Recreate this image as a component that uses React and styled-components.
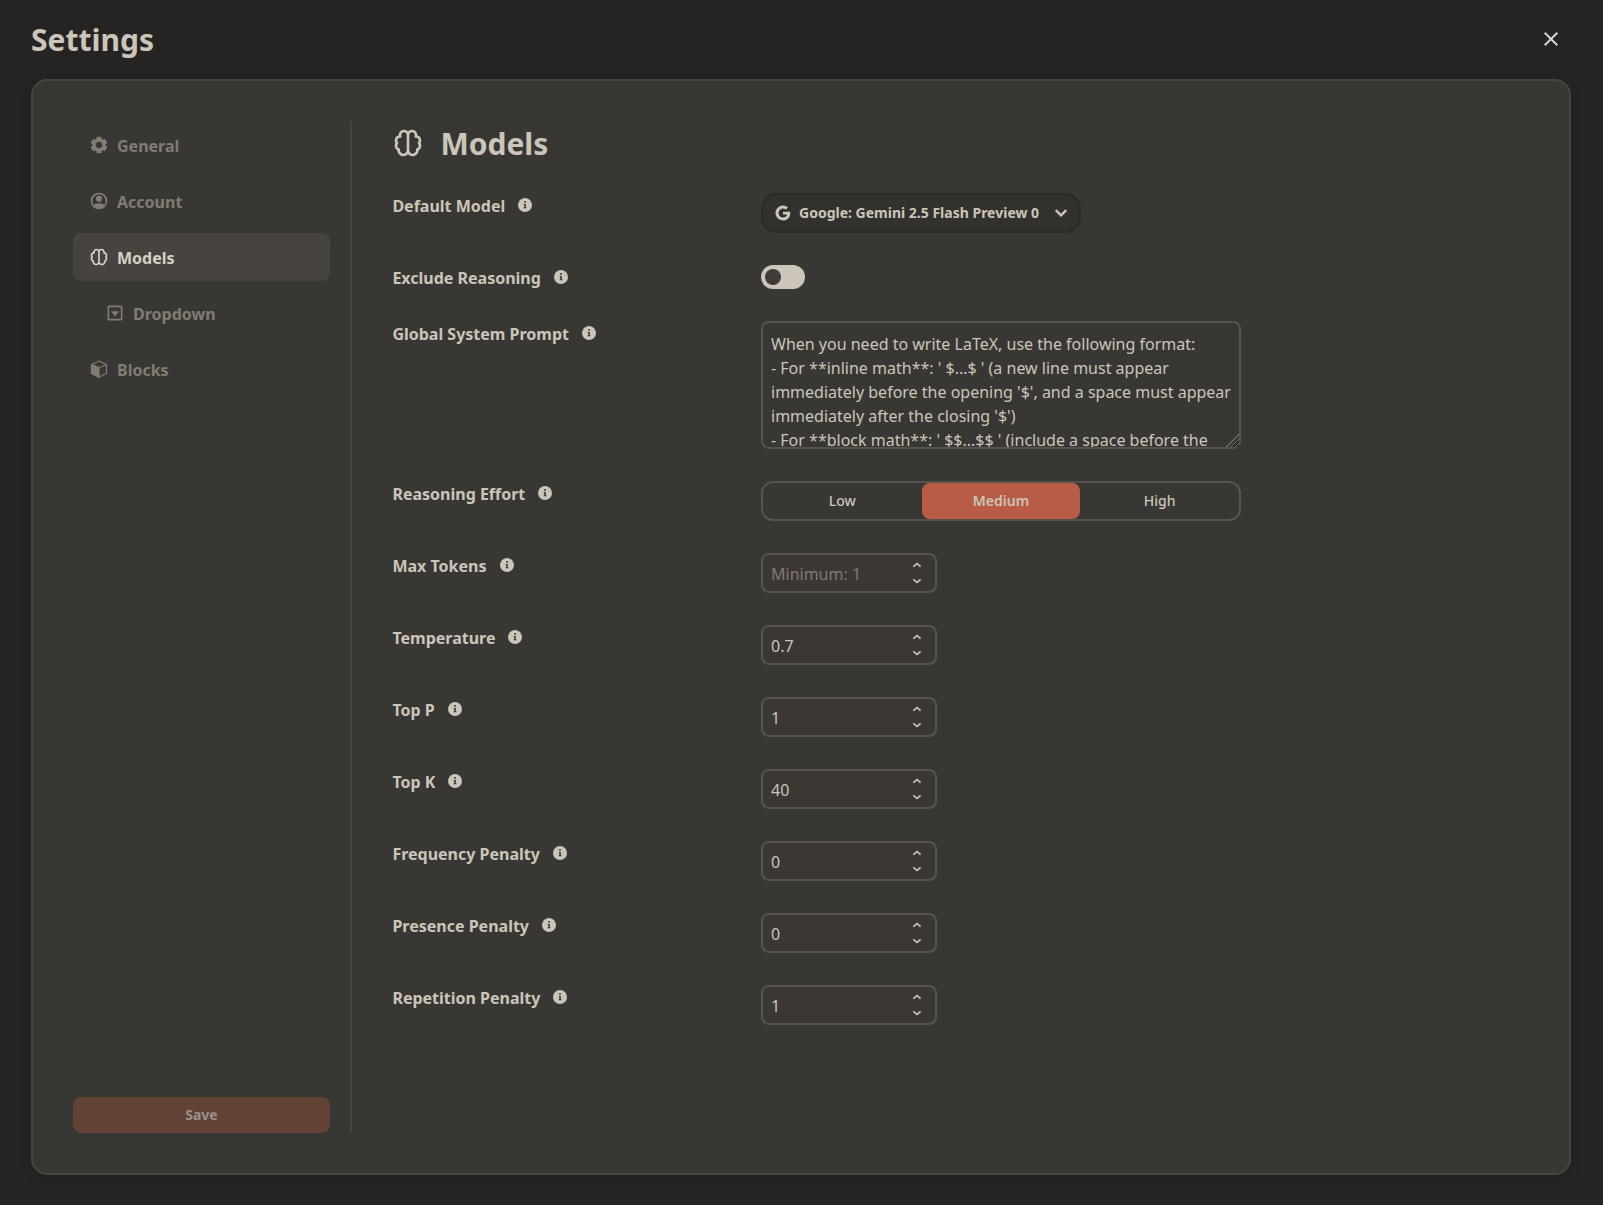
import React from 'react';
import styled, { createGlobalStyle } from 'styled-components';
import { RiBrain2Line, RiGoogleFill } from 'react-icons/ri';
import { BiSolidCog, BiCaretDownSquare } from 'react-icons/bi';
import { MdClose } from 'react-icons/md';

const color = {
  page: '#252422',
  card: '#393733',
  cardBorder: '#474540',
  text: '#ccc5b9',
  muted: '#827c73',
  active: '#47443f',
  control: '#57544e',
  accent: '#b85c46',
};

const GlobalStyle = createGlobalStyle`
  *, *::before, *::after { box-sizing: border-box; }
  body {
    margin: 0;
    background: ${color.page};
    color: ${color.text};
    font-family: "Noto Sans", sans-serif;
    font-size: 16px;
    line-height: 24px;
  }
  button, input, textarea { font: inherit; color: inherit; }
`;

const Page = styled.div`
  height: 100vh;
  padding: 16px 32px 30px 31px;
  display: flex;
  flex-direction: column;
  overflow: hidden;
`;

const TopBar = styled.header`
  height: 48px;
  margin-bottom: 15px;
  display: flex;
  align-items: center;
  justify-content: space-between;
`;

const Title = styled.h1`
  margin: 0;
  font-size: 30px;
  line-height: 48px;
  font-weight: 700;
`;

const CloseButton = styled.button`
  width: 40px;
  height: 40px;
  margin-bottom: 2px;
  padding: 0;
  border: 0;
  background: none;
  display: grid;
  place-items: center;
  color: #d3d6cf;
`;

const Card = styled.main`
  flex: 1;
  min-height: 0;
  display: flex;
  padding: 40px;
  background: ${color.card};
  border: 2px solid ${color.cardBorder};
  border-radius: 16px;
  box-shadow: 0 4px 12px rgba(0, 0, 0, 0.12);
`;

const Sidebar = styled.aside`
  width: 279px;
  padding-right: 20px;
  border-right: 2px solid ${color.cardBorder};
  display: flex;
  flex-direction: column;
  justify-content: space-between;
`;

const Nav = styled.nav`
  display: flex;
  flex-direction: column;
  gap: 8px;
`;

const NavItem = styled.a`
  height: 48px;
  padding-left: ${(p) => (p.$nested ? 32 : 16)}px;
  display: flex;
  align-items: center;
  gap: 8px;
  border-radius: 8px;
  font-weight: 700;
  color: ${(p) => (p.$active ? '#d6d1c6' : color.muted)};
  background: ${(p) => (p.$active ? color.active : 'transparent')};
  svg { width: 20px; height: 20px; }
`;

const Caption = styled.span`
  margin: 1px 0 -1px;
`;

const SaveButton = styled.button`
  height: 36px;
  border: 0;
  border-radius: 8px;
  background: #624235;
  color: #98938a;
  font-size: 14px;
  font-weight: 700;
`;

const Content = styled.section`
  flex: 1;
  padding-left: 40px;
`;

const Heading = styled.h2`
  margin: 0 0 24px;
  height: 48px;
  padding: 0 0 4px 0.4px;
  display: flex;
  align-items: center;
  gap: 16px;
  font-size: 30px;
  line-height: 44px;
  font-weight: 700;
  svg { width: 32px; height: 32px; }
`;

const Rows = styled.div`
  display: flex;
  flex-direction: column;
  gap: 32px;
`;

const Row = styled.div`
  display: grid;
  grid-template-columns: 369px 480px;
  align-items: start;
`;

const Label = styled.label`
  display: flex;
  align-items: center;
  gap: 13px;
  padding-left: 0.4px;
  font-weight: 700;
`;

const Select = styled.button`
  width: 320px;
  height: 40px;
  padding: 0 11px;
  display: flex;
  align-items: center;
  gap: 7px;
  border: 2px solid #2b2a27;
  border-radius: 16px;
  background: #32312d;
  font-size: 14px;
  font-weight: 700;
  white-space: nowrap;
  span { flex: 1; text-align: left; }
`;

const Toggle = styled.div`
  width: 44px;
  height: 24px;
  padding: 4px;
  border-radius: 12px;
  background: ${color.text};
  &::before {
    content: "";
    display: block;
    width: 16px;
    height: 16px;
    border-radius: 50%;
    background: #403d39;
  }
`;

const Prompt = styled.textarea`
  display: block;
  width: 480px;
  height: 128px;
  padding: 9px 8px 8px;
  border: 2px solid ${color.control};
  border-radius: 8px;
  background: transparent;
  resize: vertical;
  outline: none;
  line-height: 24px;
  &::-webkit-scrollbar { width: 0; height: 0; }
  &::-webkit-resizer {
    background:
      linear-gradient(135deg, ${color.card} 54%, transparent 54%),
      repeating-linear-gradient(135deg, #6f6b64 0 1px, #2b2a27 1px 2px, ${color.card} 2px 3px);
  }
`;

const Segments = styled.div`
  height: 40px;
  display: grid;
  grid-template-columns: repeat(3, 1fr);
  border: 2px solid ${color.control};
  border-radius: 12px;
`;

const Segment = styled.button`
  padding: 0;
  border: 0;
  border-radius: 8px;
  background: ${(p) => (p.$selected ? color.accent : 'transparent')};
  font-size: 14px;
  font-weight: ${(p) => (p.$selected ? 600 : 500)};
`;

const NumberField = styled.div`
  width: 176px;
  height: 40px;
  padding: 0 13px 0 8px;
  display: flex;
  align-items: center;
  border: 2px solid ${color.control};
  border-radius: 8px;
  background: #3b3733;
`;

const NumberInput = styled.input`
  flex: 1;
  min-width: 0;
  height: 26px;
  padding: 2px 0 0;
  border: 0;
  outline: none;
  background: none;
  &::placeholder { color: #85786f; opacity: 1; }
`;

const Stepper = styled.div`
  width: 10px;
  display: flex;
  flex-direction: column;
  gap: 10px;
  svg { display: block; }
`;

const AccountIcon = () => (
  <svg viewBox="0 0 24 24" fill="none">
    <circle cx="12" cy="12" r="9" stroke="currentColor" strokeWidth="2" />
    <circle cx="12" cy="9.3" r="3.7" fill="currentColor" />
    <path d="M5 17.5C6.6 15.6 9 14.8 12 14.8s5.4.8 7 2.7A9 9 0 0 1 12 21a9 9 0 0 1-7-3.5Z" fill="currentColor" />
  </svg>
);

const CubeIcon = () => (
  <svg viewBox="0 0 24 24" fill="none" stroke="currentColor" strokeWidth="1.4" strokeLinejoin="round">
    <path d="M12 2.4 21 6.6v10.6L12 21.8 3 17.2V6.6Z" />
    <path d="M3 6.6l9 4 9-4" />
    <path d="M3 6.6l9 4v11.2L3 17.2Z" fill="currentColor" />
  </svg>
);

const InfoIcon = () => (
  <svg width="14" height="14" viewBox="0 0 14 14">
    <circle cx="7" cy="7" r="7" fill="currentColor" />
    <circle cx="7" cy="4" r="1" fill={color.card} />
    <path d="M5.7 5.9h2.1v3.4h.6v1H5.7v-1h.6V6.9h-.6Z" fill={color.card} />
  </svg>
);

const Chevron = () => (
  <svg width="14" height="10" viewBox="0 0 14 10" fill="none" stroke="currentColor" strokeWidth="2.4">
    <path d="M1.8 2.2 7 7.4l5.2-5.2" />
  </svg>
);

const StepArrow = ({ up }) => (
  <svg width="10" height="6" viewBox="0 0 10 6" fill="none" stroke="currentColor" strokeWidth="1.7">
    <path d={up ? 'M1.4 4.7 5 1.6l3.6 3.1' : 'M1.4 1.3 5 4.4l3.6-3.1'} />
  </svg>
);

const navItems = [
  { name: 'General', icon: BiSolidCog },
  { name: 'Account', icon: AccountIcon },
  { name: 'Models', icon: RiBrain2Line, active: true },
  { name: 'Dropdown', icon: BiCaretDownSquare, nested: true },
  { name: 'Blocks', icon: CubeIcon },
];

const numberSettings = [
  { label: 'Max Tokens', placeholder: 'Minimum: 1' },
  { label: 'Temperature', value: '0.7' },
  { label: 'Top P', value: '1' },
  { label: 'Top K', value: '40' },
  { label: 'Frequency Penalty', value: '0' },
  { label: 'Presence Penalty', value: '0' },
  { label: 'Repetition Penalty', value: '1' },
];

const systemPrompt = `When you need to write LaTeX, use the following format:
- For **inline math**: ' $...$ ' (a new line must appear immediately before the opening '$', and a space must appear immediately after the closing '$')
- For **block math**: ' $$...$$ ' (include a space before the`;

const Setting = ({ label, children }) => (
  <Row>
    <Label>
      <Caption>{label}</Caption>
      <InfoIcon />
    </Label>
    {children}
  </Row>
);

export default function App() {
  return (
    <>
      <GlobalStyle />
      <Page>
        <TopBar>
          <Title>Settings</Title>
          <CloseButton aria-label="Close">
            <MdClose size={24} />
          </CloseButton>
        </TopBar>
        <Card>
          <Sidebar>
            <Nav>
              {navItems.map(({ name, icon: Icon, active, nested }) => (
                <NavItem key={name} $active={active} $nested={nested}>
                  <Icon />
                  <Caption>{name}</Caption>
                </NavItem>
              ))}
            </Nav>
            <SaveButton>Save</SaveButton>
          </Sidebar>
          <Content>
            <Heading>
              <RiBrain2Line />
              <Caption>Models</Caption>
            </Heading>
            <Rows>
              <Setting label="Default Model">
                <Select>
                  <RiGoogleFill size={18} />
                  <span>Google: Gemini 2.5 Flash Preview 0</span>
                  <Chevron />
                </Select>
              </Setting>
              <Setting label="Exclude Reasoning">
                <Toggle />
              </Setting>
              <Setting label="Global System Prompt">
                <Prompt defaultValue={systemPrompt} spellCheck={false} />
              </Setting>
              <Setting label="Reasoning Effort">
                <Segments>
                  <Segment>Low</Segment>
                  <Segment $selected>Medium</Segment>
                  <Segment>High</Segment>
                </Segments>
              </Setting>
              {numberSettings.map(({ label, value, placeholder }) => (
                <Setting key={label} label={label}>
                  <NumberField>
                    <NumberInput defaultValue={value} placeholder={placeholder} />
                    <Stepper>
                      <StepArrow up />
                      <StepArrow />
                    </Stepper>
                  </NumberField>
                </Setting>
              ))}
            </Rows>
          </Content>
        </Card>
      </Page>
    </>
  );
}
